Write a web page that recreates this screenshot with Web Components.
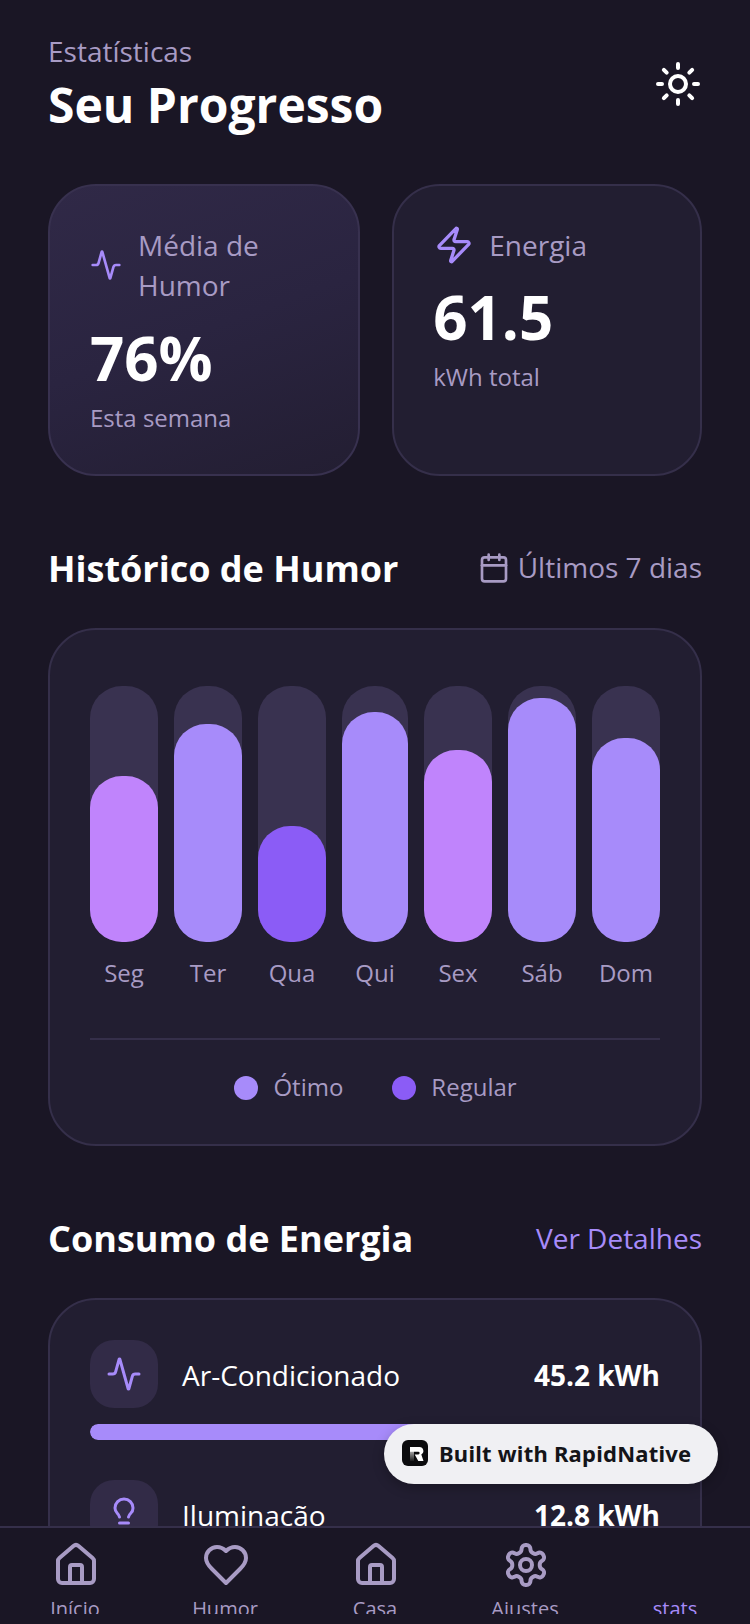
<!DOCTYPE html>
<html lang="pt"><head><meta charset="utf-8"><title>Seu Progresso</title>
<style>
html,body{margin:0;padding:0;background:#1a1625;font-family:"Open Sans",sans-serif}
</style></head><body>
<app-shell>
  <page-header slot="main" overline="Estatísticas" heading="Seu Progresso"></page-header>
  <div slot="main" class="stats" style="display:flex;gap:32px;margin-top:47px">
    <stat-card style="flex:311 1 0" highlight icon="activity" iconsize="32" gap="16" inset="40" vgap="11.5" label="Média de Humor" value="76%" note="Esta semana"></stat-card>
    <stat-card style="flex:309 1 0" icon="zap" iconsize="40" gap="15" inset="39" vgap="11" label="Energia" value="61.5" note="kWh total"></stat-card>
  </div>
  <section-head slot="main" style="margin-top:69px" heading="Histórico de Humor"><span style="display:flex;align-items:center;gap:8px;margin-bottom:2px"><ui-icon name="calendar" size="32" color="#a89bc4"></ui-icon><span style="color:#a89bc4;line-height:36px;margin-bottom:2px">Últimos 7 dias</span></span></section-head>
  <mood-chart slot="main" style="margin-top:35px"></mood-chart>
  <section-head slot="main" style="margin-top:69px" heading="Consumo de Energia"><span style="color:#a78bfa;margin-bottom:3px">Ver Detalhes</span></section-head>
  <energy-card slot="main" style="margin-top:35px">
    <energy-row icon="activity" name="Ar-Condicionado" value="45.2 kWh" pct="72"></energy-row>
    <energy-row icon="bulb" name="Iluminação" value="12.8 kWh" pct="20"></energy-row>
  </energy-card>
  <tab-bar slot="nav"></tab-bar>
  <rn-badge slot="over"></rn-badge>
</app-shell>
<script>
const ICONS={
activity:'<path d="M22 12h-2.48a2 2 0 0 0-1.93 1.46l-2.35 8.36a.25.25 0 0 1-.48 0L9.24 2.18a.25.25 0 0 0-.48 0l-2.35 8.36A2 2 0 0 1 4.49 12H2"/>',
zap:'<path d="M4 14a1 1 0 0 1-.78-1.63l9.9-10.2a.5.5 0 0 1 .86.46l-1.92 6.02A1 1 0 0 0 13 10h7a1 1 0 0 1 .78 1.63l-9.9 10.2a.5.5 0 0 1-.86-.46l1.92-6.02A1 1 0 0 0 11 14z"/>',
sun:'<circle cx="12" cy="12" r="4"/><path d="M12 2v2M12 20v2M4.93 4.93l1.41 1.41M17.66 17.66l1.41 1.41M2 12h2M20 12h2M6.34 17.66l-1.41 1.41M19.07 4.93l-1.41 1.41"/>',
calendar:'<path d="M8 2v4M16 2v4"/><rect x="3" y="4" width="18" height="18" rx="2"/><path d="M3 10h18"/>',
bulb:'<path d="M15 14c.2-1 .7-1.7 1.5-2.5 1-.9 1.5-2.2 1.5-3.5A6 6 0 0 0 6 8c0 1 .2 2.2 1.5 3.5.7.7 1.3 1.5 1.5 2.5"/><path d="M9 18h6M10 22h4"/>',
home:'<path d="M15 21v-8a1 1 0 0 0-1-1h-4a1 1 0 0 0-1 1v8"/><path d="M3 10a2 2 0 0 1 .709-1.528l7-5.999a2 2 0 0 1 2.582 0l7 5.999A2 2 0 0 1 21 10v9a2 2 0 0 1-2 2H5a2 2 0 0 1-2-2z"/>',
heart:'<path d="M19 14c1.49-1.46 3-3.21 3-5.5A5.5 5.5 0 0 0 16.5 3c-1.76 0-3 .5-4.5 2-1.5-1.5-2.74-2-4.5-2A5.5 5.5 0 0 0 2 8.5c0 2.3 1.5 4.05 3 5.5l7 7Z"/>',
gear:'<path d="M12.22 2h-.44a2 2 0 0 0-2 2v.18a2 2 0 0 1-1 1.73l-.43.25a2 2 0 0 1-2 0l-.15-.08a2 2 0 0 0-2.73.73l-.22.38a2 2 0 0 0 .73 2.73l.15.1a2 2 0 0 1 1 1.72v.51a2 2 0 0 1-1 1.74l-.15.09a2 2 0 0 0-.73 2.73l.22.38a2 2 0 0 0 2.73.73l.15-.08a2 2 0 0 1 2 0l.43.25a2 2 0 0 1 1 1.73V20a2 2 0 0 0 2 2h.44a2 2 0 0 0 2-2v-.18a2 2 0 0 1 1-1.73l.43-.25a2 2 0 0 1 2 0l.15.08a2 2 0 0 0 2.73-.73l.22-.39a2 2 0 0 0-.73-2.73l-.15-.08a2 2 0 0 1-1-1.74v-.5a2 2 0 0 1 1-1.74l.15-.09a2 2 0 0 0 .73-2.73l-.22-.38a2 2 0 0 0-2.73-.73l-.15.08a2 2 0 0 1-2 0l-.43-.25a2 2 0 0 1-1-1.73V4a2 2 0 0 0-2-2z"/><circle cx="12" cy="12" r="3"/>'
};
function def(name,fn){customElements.define(name,class extends HTMLElement{
  connectedCallback(){ if(this.shadowRoot) return; this.attachShadow({mode:'open'}).innerHTML=fn(this); }
});}
const a=(el,k)=>el.getAttribute(k)||'';
def('ui-icon',el=>{const s=a(el,'size')||24,c=a(el,'color')||'#a78bfa';return `<style>:host{display:block;flex:none;width:${s}px;height:${s}px;line-height:0}</style><svg width="${s}" height="${s}" viewBox="0 0 24 24" fill="none" stroke="${c}" stroke-width="2" stroke-linecap="round" stroke-linejoin="round">${ICONS[a(el,'name')]}</svg>`});
def('app-shell',()=>`<style>
:host{display:block;position:relative;width:750px;height:1624px;background:#1a1625;overflow:hidden;font-family:"Open Sans",sans-serif}
.col{display:flex;flex-direction:column;height:100%}
main{flex:1 1 0;min-height:0;overflow:hidden;padding:32px 48px 0;display:flex;flex-direction:column}
</style><div class="col"><main><slot name="main"></slot></main><slot name="nav"></slot></div><slot name="over"></slot>`);
def('page-header',el=>`<style>
:host{display:flex;justify-content:space-between;align-items:flex-start;flex:none}
.o{font-size:28px;line-height:38px;color:#a89bc4;margin-bottom:3px}
h1{margin:0;font-size:48px;line-height:64px;font-weight:700;color:#fff}
ui-icon{margin-top:28px}
</style><div><div class="o">${a(el,'overline')}</div><h1>${a(el,'heading')}</h1></div><ui-icon name="sun" size="48" color="#fff"></ui-icon>`);
def('stat-card',el=>{const hi=el.hasAttribute('highlight'),ins=+a(el,'inset');return `<style>
:host{display:block;box-sizing:border-box;height:292px;min-width:0;padding:40px 40px 40px ${ins}px;border:2px solid ${hi?'#38314f':'#352f4a'};border-radius:48px;background:${hi?'linear-gradient(160deg,#302947 0%,#2a2440 50%,#231e32 100%)':'#221e31'}}
.r{display:flex;align-items:center;gap:${a(el,'gap')}px;margin-top:-1px}
ui-icon{margin-left:${40-ins}px}
.l{font-size:28px;line-height:40px;color:#a89bc4}
.v{font-size:60px;line-height:82px;font-weight:700;color:#fff;margin-top:${a(el,'vgap')}px}
.n{font-size:24px;line-height:33px;color:#a89bc4;margin-top:2px}
</style><div class="r"><ui-icon name="${a(el,'icon')}" size="${a(el,'iconsize')}"></ui-icon><div class="l">${a(el,'label')}</div></div><div class="v">${a(el,'value')}</div><div class="n">${a(el,'note')}</div>`});
def('section-head',el=>`<style>
:host{display:flex;justify-content:space-between;align-items:center;flex:none;font-size:28px;line-height:38px}
h2{margin:0;font-size:36px;line-height:48px;font-weight:700;color:#fff}
</style><h2>${a(el,'heading')}</h2><slot></slot>`);
def('mood-chart',()=>{
 const d=[['Seg',65,'#c084fc',68],['Ter',85,'#a78bfa',68],['Qua',45.3,'#8b5cf6',68],['Qui',90,'#a78bfa',66],['Sex',75,'#c084fc',68],['Sáb',95.3,'#a78bfa',68],['Dom',79.7,'#a78bfa',68]];
 return `<style>
:host{display:block;flex:none;box-sizing:border-box;border:2px solid #352f4a;border-radius:48px;background:#221e31;padding:56px 40px 42px}
.bars{display:flex;gap:16px}
.c{min-width:0;display:flex;flex-direction:column;align-items:center}
.t{width:100%;height:256px;border-radius:32px;background:#393250;display:flex;align-items:flex-end}
.f{width:100%;border-radius:32px}
.d{margin-top:14px;font-size:24px;line-height:33px;color:#a89bc4}
.leg{margin-top:49px;border-top:2px solid #352f4a;padding-top:31px;display:flex;justify-content:center;gap:48px;font-size:24px;line-height:31px;color:#a89bc4}
.i{display:flex;align-items:flex-start;gap:15px}
.dot{width:24px;height:24px;border-radius:50%;margin:4.5px 0 0 1px}
</style><div class="bars">${d.map(x=>`<div class="c" style="flex:0 0 ${x[3]}px"><div class="t"><div class="f" style="height:${x[1]}%;background:${x[2]}"></div></div><div class="d">${x[0]}</div></div>`).join('')}</div>
<div class="leg"><div class="i"><span class="dot" style="background:#a78bfa"></span>Ótimo</div><div class="i"><span class="dot" style="background:#8b5cf6"></span>Regular</div></div>`});
def('energy-card',()=>`<style>
:host{display:flex;flex-direction:column;gap:40px;flex:none;box-sizing:border-box;border:2px solid #352f4a;border-radius:48px;background:#221e31;padding:40px}
</style><slot></slot>`);
def('energy-row',el=>`<style>
:host{display:block}
.r{display:flex;align-items:center}
.b{width:68px;height:68px;border-radius:24px;background:#322b47;display:flex;align-items:center;justify-content:center;flex:none}
.n{flex:1;margin:2px 0 0 24px;font-size:28px;line-height:38px;color:#fff}
.v{font-size:28px;line-height:38px;font-weight:700;color:#fff;margin-top:2px}
.p{margin-top:16px;height:16px;border-radius:8px;background:#393250;overflow:hidden}
.p i{display:block;height:100%;border-radius:8px;background:#a78bfa;width:${a(el,'pct')}%}
</style><div class="r"><div class="b"><ui-icon name="${a(el,'icon')}" size="36"></ui-icon></div><div class="n">${a(el,'name')}</div><div class="v">${a(el,'value')}</div></div><div class="p"><i></i></div>`);
def('tab-bar',()=>{
 const t=[['home','Início'],['heart','Humor'],['home','Casa'],['gear','Ajustes'],['','stats']];
 return `<style>
:host{display:flex;flex:none;box-sizing:border-box;height:98px;border-top:2px solid #352f4a;background:#1a1625;padding-top:13px}
.t{flex:1 1 0;height:73px;overflow:hidden;display:flex;flex-direction:column;align-items:center}
.ic{width:48px;height:48px;flex:none;margin-left:2px}
.l{font-size:20px;line-height:27px;margin-top:6px;color:#a89bc4}
.on .l{color:#a78bfa}
</style>${t.map(x=>`<div class="t${x[0]?'':' on'}"><div class="ic">${x[0]?`<ui-icon name="${x[0]}" size="48" color="#a89bc4"></ui-icon>`:''}</div><div class="l">${x[1]}</div></div>`).join('')}`});
def('rn-badge',()=>`<style>
:host{position:absolute;left:384px;top:1424px;width:334px;height:60px;box-sizing:border-box;display:flex;align-items:center;gap:11px;padding-left:18px;border-radius:30px;background:#f0f0f3;box-shadow:0 4px 12px rgba(0,0,0,.25);font:700 22px/30px "Noto Sans",sans-serif;letter-spacing:.24px;color:#141418}
svg{flex:none;display:block;margin-bottom:2px}
span{margin-bottom:2px}
</style><svg width="26" height="26" viewBox="0 0 26 26"><defs><linearGradient id="g" x1="0" y1="0" x2="0" y2="1"><stop offset="0" stop-color="#e8e8e8"/><stop offset="1" stop-color="#1c1c1c"/></linearGradient></defs><rect width="26" height="26" rx="6" fill="#0b0b0d"/><path d="M8 7h4v14H8z" fill="url(#g)"/><path d="M8 7h9.5a4 4 0 0 1 1.8 7.5L21.5 21h-5.2l-3.6-6.6h3.6a1.3 1.3 0 0 0 0-2.6H8z" fill="#fff"/></svg><span>Built with RapidNative</span>`);
</script>
</body></html>
